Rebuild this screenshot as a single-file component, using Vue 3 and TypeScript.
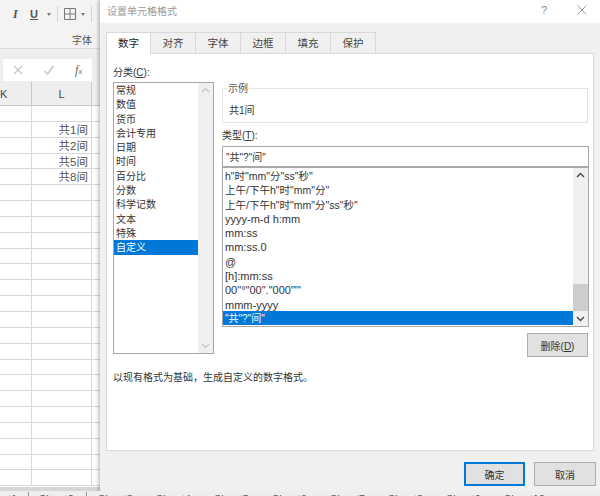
<script setup lang="ts">
const rows = Array.from({ length: 24 }, (_, i) => i)
const values: Record<number, string> = { 1: '共1间', 2: '共2间', 3: '共5间', 4: '共8间' }
const tabs = ['数字', '对齐', '字体', '边框', '填充', '保护']
const categories = ['常规', '数值', '货币', '会计专用', '日期', '时间', '百分比', '分数', '科学记数', '文本', '特殊', '自定义']
const selectedType = '"共"?"间"'
const types = ['h"时"mm"分"ss"秒"', '上午/下午h"时"mm"分"', '上午/下午h"时"mm"分"ss"秒"', 'yyyy-m-d h:mm', 'mm:ss', 'mm:ss.0', '@', '[h]:mm:ss', '00"°"00"."000"\'"', 'mmm-yyyy', selectedType]
const sheetNames = ['Sheet3', 'Sheet4', 'Sheet5', 'Sheet6', 'Sheet7', 'Sheet8', 'Sheet9', 'Sheet10']
const hasCjk = (s: string) => /[\u4e00-\u9fff]/.test(s)
</script>

<template>
  <div class="screen">
    <section class="sheet">
      <div class="ribbon">
        <div class="tools">
          <span class="italic">I</span>
          <span class="under">U</span>
          <span class="caret"></span>
          <span class="sep"></span>
          <svg class="grid-icon" width="12" height="12" viewBox="0 0 12 12"><path d="M.5.5h11v11H.5zM6 .5v11M.5 6h11" fill="none" stroke="#777" /></svg>
          <span class="caret"></span>
          <span class="sep"></span>
        </div>
        <div class="group-name">字体</div>
      </div>
      <div class="formula">
        <div class="formula-box">
          <svg width="10" height="10" viewBox="0 0 10 10"><path d="M1 1l8 8M9 1L1 9" stroke="#c4c4c4" stroke-width="1.2" /></svg>
          <svg width="10" height="10" viewBox="0 0 10 10"><path d="M.5 6l3 3 6-8" fill="none" stroke="#c4c4c4" stroke-width="1.4" /></svg>
          <span class="fx">f<small>x</small></span>
        </div>
      </div>
      <div class="col-head">
        <span class="col-k">K</span>
        <span class="col-l">L</span>
      </div>
      <div class="rows">
        <div v-for="r in rows" :key="r" class="row">
          <span class="cell-k"></span>
          <span class="cell-l">{{ values[r] }}</span>
        </div>
      </div>
      <div class="sheet-foot"></div>
    </section>

    <section class="dialog">
      <header class="title">
        <span class="title-text">设置单元格格式</span>
        <span class="help">?</span>
        <svg class="close" width="10" height="10" viewBox="0 0 10 10"><path d="M.5.5l9 9M9.5.5l-9 9" stroke="#999" /></svg>
      </header>
      <div class="body">
        <nav class="tabs">
          <span v-for="(t, i) in tabs" :key="t" class="tab" :class="{ active: i === 0 }">{{ t }}</span>
        </nav>
        <div class="panel">
          <div class="columns">
            <div class="left">
              <div class="label">分类(<u>C</u>):</div>
              <div class="cat-list">
                <div class="cat-items">
                  <div v-for="c in categories" :key="c" class="item cat-item" :class="{ sel: c === '自定义' }">{{ c }}</div>
                </div>
                <div class="cat-scroll">
                  <svg width="9" height="6" viewBox="0 0 9 6"><path d="M1 5l3.5-3.5L8 5" fill="none" stroke="#c8c8c8" stroke-width="1.4" /></svg>
                  <svg width="9" height="6" viewBox="0 0 9 6"><path d="M1 1l3.5 3.5L8 1" fill="none" stroke="#c8c8c8" stroke-width="1.4" /></svg>
                </div>
              </div>
            </div>
            <div class="right">
              <div class="sample">
                <span class="legend">示例</span>
                <span class="sample-text">共1间</span>
              </div>
              <div class="label type-label">类型(<u>T</u>):</div>
              <div class="input">"共"?"间"</div>
              <div class="type-list">
                <div class="type-items">
                  <div v-for="t in types" :key="t" class="item type-item" :class="{ sel: t === selectedType, cjk: hasCjk(t) }">{{ t }}</div>
                </div>
                <div class="type-scroll">
                  <svg width="9" height="6" viewBox="0 0 9 6"><path d="M1 5l3.5-3.5L8 5" fill="none" stroke="#444" stroke-width="1.4" /></svg>
                  <div class="track"><div class="thumb"></div></div>
                  <svg width="9" height="6" viewBox="0 0 9 6"><path d="M1 1l3.5 3.5L8 1" fill="none" stroke="#444" stroke-width="1.4" /></svg>
                </div>
              </div>
              <div class="del-row"><button class="btn del">删除(<u>D</u>)</button></div>
            </div>
          </div>
          <p class="hint">以现有格式为基础，生成自定义的数字格式。</p>
        </div>
        <footer class="actions">
          <button class="btn ok">确定</button>
          <button class="btn cancel">取消</button>
        </footer>
      </div>
    </section>

    <div class="status">
      <span class="sheet-tab first">t1</span>
      <span class="sheet-tab second">Sheet2</span>
      <span v-for="s in sheetNames" :key="s" class="sheet-tab plain">{{ s }}</span>
    </div>
  </div>
</template>

<style>
html, body { margin: 0; background: #fff; }
</style>

<style scoped>
.screen {
  position: relative;
  display: flex;
  width: 600px;
  height: 496px;
  overflow: hidden;
  font-family: "Liberation Sans", "Noto Sans CJK SC", sans-serif;
  font-size: 10px;
  color: #333;
  background: #fff;
}
.sheet { width: 100px; height: 496px; flex: none; display: flex; flex-direction: column; overflow: hidden; }
.ribbon { height: 49px; flex: none; background: #f3f3f3; border-bottom: 1px solid #dcdcdc; box-sizing: border-box; }
.tools { display: flex; align-items: center; height: 28px; padding-left: 13px; box-sizing: border-box; color: #555; }
.italic { font-family: "Liberation Serif", serif; font-style: italic; font-weight: bold; font-size: 12px; width: 17px; flex: none; }
.under { text-decoration: underline; font-weight: bold; font-size: 11px; width: 12px; flex: none; }
.caret { width: 0; height: 0; flex: none; margin-left: 5px; border: 2.5px solid transparent; border-top: 3px solid #777; border-bottom: 0; }
.sep { width: 1px; height: 16px; flex: none; background: #d4d4d4; margin-left: 6px; }
.grid-icon { flex: none; margin-left: 6px; }
.group-name { text-align: right; padding: 6px 8px 0 0; color: #555; font-size: 10px; line-height: 13px; }
.formula { height: 33px; flex: none; background: #eeeeee; padding: 10px 0 0 3px; box-sizing: border-box; }
.formula-box { width: 89px; height: 22px; background: #fff; display: flex; align-items: center; justify-content: space-between; padding: 0 10px; box-sizing: border-box; }
.fx { font-family: "Liberation Serif", serif; font-style: italic; font-size: 12px; color: #666; }
.fx small { font-size: 8px; }
.col-head { display: flex; height: 24px; flex: none; background: #eeeeee; border-bottom: 1px solid #c9c9c9; box-sizing: border-box; font-size: 11px; line-height: 25px; color: #444; }
.col-k { width: 32px; border-right: 1px solid #c9c9c9; box-sizing: border-box; }
.col-l { width: 60px; border-right: 1px solid #c9c9c9; box-sizing: border-box; text-align: center; }
.rows { flex: 1; overflow: hidden; min-height: 0; }
.row { display: flex; height: 15.85px; box-sizing: border-box; border-bottom: 1px solid #d8d8d8; }
.cell-k { width: 32px; border-right: 1px solid #d8d8d8; box-sizing: border-box; }
.cell-l { width: 60px; border-right: 1px solid #d8d8d8; box-sizing: border-box; text-align: right; padding-right: 3px; line-height: 17px; font-size: 11.5px; color: #555; }
.sheet-foot { height: 9px; flex: none; background: #d6d6d6; }
.dialog {
  width: 500px;
  height: 491px;
  flex: none;
  background: #f0f0f0;
  box-shadow: -2px 0 3px rgba(0, 0, 0, .22);
  display: flex;
  flex-direction: column;
  position: relative;
  z-index: 1;
}
.title { height: 23px; background: #fff; display: flex; align-items: center; padding: 0 13px 3px 7px; box-sizing: border-box; flex: none; }
.title-text { flex: 1; color: #9a9a9a; font-size: 10px; }
.help { color: #888; margin-right: 30px; font-size: 11px; }
.body { flex: 1; padding: 9px 6px 0; display: flex; flex-direction: column; }
.tabs { display: flex; height: 21px; flex: none; position: relative; z-index: 1; }
.tab {
  width: 45px;
  box-sizing: border-box;
  text-align: center;
  line-height: 21px;
  font-size: 10.5px;
  border: 1px solid #d9d9d9;
  border-left: 0;
  border-bottom: 0;
  color: #444;
}
.tab.active { background: #fff; border-left: 1px solid #d9d9d9; height: 22px; color: #222; }
.panel {
  height: 398px;
  flex: none;
  background: #fff;
  border: 1px solid #d9d9d9;
  box-sizing: border-box;
  padding: 11px 4px 0 6px;
}
.columns { display: flex; gap: 8px; }
.left { width: 101px; flex: none; }
.right { flex: 1; padding-top: 23px; min-width: 0; }
.label { line-height: 16px; height: 17px; color: #333; }
.cat-list { display: flex; height: 272px; border: 1px solid #a8a8a8; box-sizing: border-box; }
.cat-items { flex: 1; min-width: 0; }
.cat-scroll, .type-scroll { width: 15px; flex: none; background: #f0f0f0; display: flex; flex-direction: column; justify-content: space-between; align-items: center; padding: 4px 0; box-sizing: border-box; }
.item { height: 14.3px; line-height: 16px; padding-left: 2px; white-space: nowrap; color: #333; font-size: 11px; }
.item.cjk { font-size: 10.5px; }
.item.cat-item { font-size: 10px; }
.item.type-item { line-height: 17px; }
.item.sel { background: #0078d7; color: #fff; font-size: 10px; line-height: 15px; }
.sample { position: relative; height: 35px; margin-right: 1px; border: 1px solid #e4e4e4; box-sizing: border-box; padding: 15px 0 0 6px; }
.legend { position: absolute; top: -7px; left: 4px; padding: 0 1px; background: #fff; line-height: 14px; color: #555; }
.sample-text { line-height: 14px; }
.type-label { margin-top: 5px; height: 18px; }
.input { height: 22px; border: 1px solid #a8a8a8; border-bottom-width: 2px; box-sizing: border-box; line-height: 22px; padding-left: 3px; }
.type-list { display: flex; height: 159px; border: 1px solid #a8a8a8; border-top: 0; box-sizing: border-box; }
.type-items { flex: 1; min-width: 0; display: flex; flex-direction: column; }
.track { flex: 1; width: 100%; display: flex; flex-direction: column; justify-content: flex-end; margin: 4px 0 5px; }
.thumb { height: 27px; background: #cdcdcd; }
.del-row { display: flex; justify-content: flex-end; padding: 6px 1px 0 0; }
.btn { font: inherit; color: #333; background: #e1e1e1; border: 1px solid #adadad; box-sizing: border-box; padding: 0; }
.del { width: 61px; height: 24px; }
.hint { margin: 14px 0 0; line-height: 14px; }
.actions { display: flex; gap: 9px; justify-content: flex-end; padding: 11px 0 0; margin-right: -2px; }
.ok { width: 61px; height: 24px; border: 2px solid #0078d7; }
.cancel { width: 62px; height: 24px; }
.status { position: absolute; left: 0; right: 0; bottom: 0; height: 5px; padding-top: 1px; box-sizing: border-box; background: #eeeeee; display: flex; font-size: 11px; line-height: 14px; color: #555; overflow: hidden; z-index: 2; }
.sheet-tab { display: block; flex: none; box-sizing: border-box; }
.first { width: 29px; padding-left: 8px; border-right: 1px solid #999; }
.second { width: 58px; padding-left: 10px; border-right: 1px solid #999; }
.plain { width: 58px; padding-left: 11px; }
</style>
